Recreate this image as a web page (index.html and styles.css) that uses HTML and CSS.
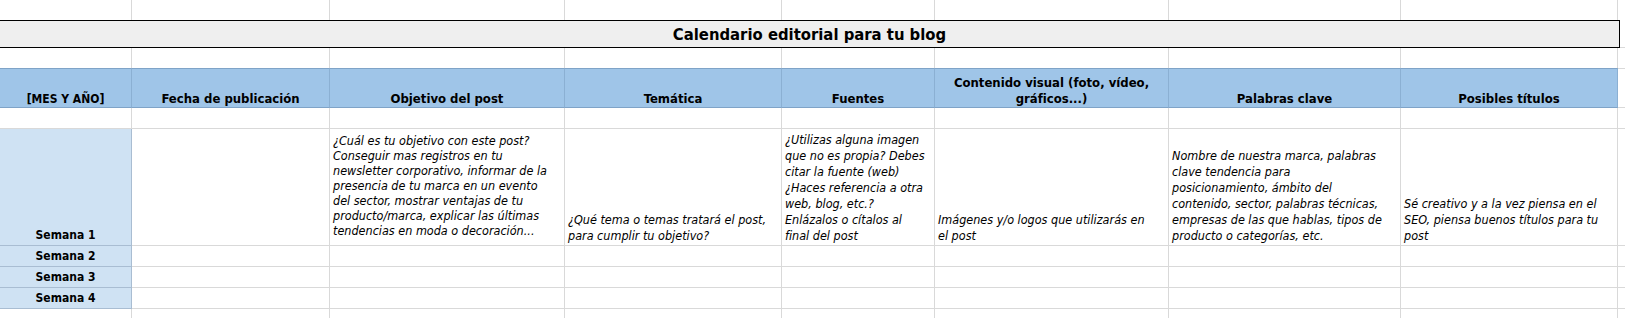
FILE: index.html
```html
<!DOCTYPE html>
<html lang="es">
<head>
<meta charset="utf-8">
<title>Calendario editorial para tu blog</title>
<link rel="stylesheet" href="styles.css">
</head>
<body>
<div class="sheet">
  <div class="row r-top">
    <div class="c"></div><div class="c"></div><div class="c"></div><div class="c"></div><div class="c"></div><div class="c"></div><div class="c"></div><div class="c"></div><div class="c last"></div>
  </div>
  <div class="row r-title">
    <div class="title">Calendario editorial para tu blog</div>
    <div class="c last"></div>
  </div>
  <div class="row r-blank">
    <div class="c"></div><div class="c"></div><div class="c"></div><div class="c"></div><div class="c"></div><div class="c"></div><div class="c"></div><div class="c"></div><div class="c last"></div>
  </div>
  <div class="row r-head">
    <div class="c h caps">[MES Y AÑO]</div>
    <div class="c h">Fecha de publicación</div>
    <div class="c h">Objetivo del post</div>
    <div class="c h">Temática</div>
    <div class="c h">Fuentes</div>
    <div class="c h">Contenido visual (foto, vídeo,<br>gráficos...)</div>
    <div class="c h">Palabras clave</div>
    <div class="c h">Posibles títulos</div>
    <div class="c last"></div>
  </div>
  <div class="row r-blank2">
    <div class="c"></div><div class="c"></div><div class="c"></div><div class="c"></div><div class="c"></div><div class="c"></div><div class="c"></div><div class="c"></div><div class="c last"></div>
  </div>
  <div class="row r-week1">
    <div class="c wk">Semana 1</div>
    <div class="c"></div>
    <div class="c t top">¿Cuál es tu objetivo con este post?<br>Conseguir mas registros en tu<br>newsletter corporativo, informar de la<br>presencia de tu marca en un evento<br>del sector, mostrar ventajas de tu<br>producto/marca, explicar las últimas<br>tendencias en moda o decoración...</div>
    <div class="c t">¿Qué tema o temas tratará el post,<br>para cumplir tu objetivo?</div>
    <div class="c t">¿Utilizas alguna imagen<br>que no es propia? Debes<br>citar la fuente (web)<br>¿Haces referencia a otra<br>web, blog, etc.?<br>Enlázalos o cítalos al<br>final del post</div>
    <div class="c t">Imágenes y/o logos que utilizarás en<br>el post</div>
    <div class="c t">Nombre de nuestra marca, palabras<br>clave tendencia para<br>posicionamiento, ámbito del<br>contenido, sector, palabras técnicas,<br>empresas de las que hablas, tipos de<br>producto o categorías, etc.</div>
    <div class="c t">Sé creativo y a la vez piensa en el<br>SEO, piensa buenos títulos para tu<br>post</div>
    <div class="c last"></div>
  </div>
  <div class="row r-week">
    <div class="c wk">Semana 2</div><div class="c"></div><div class="c"></div><div class="c"></div><div class="c"></div><div class="c"></div><div class="c"></div><div class="c"></div><div class="c last"></div>
  </div>
  <div class="row r-week">
    <div class="c wk">Semana 3</div><div class="c"></div><div class="c"></div><div class="c"></div><div class="c"></div><div class="c"></div><div class="c"></div><div class="c"></div><div class="c last"></div>
  </div>
  <div class="row r-week">
    <div class="c wk">Semana 4</div><div class="c"></div><div class="c"></div><div class="c"></div><div class="c"></div><div class="c"></div><div class="c"></div><div class="c"></div><div class="c last"></div>
  </div>
  <div class="row r-end">
    <div class="c"></div><div class="c"></div><div class="c"></div><div class="c"></div><div class="c"></div><div class="c"></div><div class="c"></div><div class="c"></div><div class="c last"></div>
  </div>
</div>
</body>
</html>
```

FILE: styles.css
```css
* { box-sizing: border-box; }
html, body { margin: 0; padding: 0; background: #fff; }
body {
  width: 1625px;
  height: 318px;
  overflow: hidden;
  font-family: "DejaVu Sans Condensed", "DejaVu Sans", sans-serif;
  font-stretch: condensed;
  color: #000;
}
.sheet { display: flex; flex-direction: column; }
.row {
  display: grid;
  grid-template-columns: 132px 198px 235px 217px 153px 234px 232px 217px 7px;
}
.c {
  border-right: 1px solid #d9d9d9;
  border-bottom: 1px solid #d9d9d9;
  display: flex;
  align-items: flex-end;
  white-space: nowrap;
  overflow: hidden;
}
.c.last { border-right: none; }

.r-top { height: 20px; }
.r-top .c { border-bottom: none; }

.r-title { height: 28px; grid-template-columns: 1620px 5px; }
.title {
  background: #efefef;
  border-top: 1px solid #000;
  border-bottom: 1px solid #000;
  border-right: 1px solid #000;
  font-weight: bold;
  font-size: 16.5px;
  display: flex;
  align-items: center;
  justify-content: center;
  padding-top: 1px;
}
.r-title .c.last { border-bottom: 1px solid #d9d9d9; }

.r-blank { height: 20px; }
.r-blank .c { border-bottom: none; }

.r-head { height: 40px; }
.r-head .c.h {
  background: #9fc5e8;
  border-top: 1px solid #7fa3c7;
  border-bottom: 1px solid #7fa3c7;
  border-right: 1px solid #8bb0d3;
  font-weight: bold;
  font-size: 13px;
  line-height: 16px;
  justify-content: center;
  text-align: center;
  padding-bottom: 0;
}
.r-head .c.h.caps { font-size: 12px; }
.r-head .c.last { border-top: 1px solid #d9d9d9; }

.r-blank2 { height: 21px; }

.r-week1 { height: 117px; }
.r-week { height: 21px; }
.r-end { height: 12px; }
.r-end .c { border-bottom: none; }

.c.wk {
  background: #cfe2f3;
  border-right: 1px solid #a9bdd2;
  border-bottom: 1px solid #a9bdd2;
  justify-content: center;
  font-weight: bold;
  font-size: 12px;
  line-height: 15px;
  padding-bottom: 2px;
}
.c.t {
  font-style: italic;
  font-size: 12.5px;
  line-height: 16px;
  padding: 0 3px 1px 3px;
}
.c.t.top {
  align-items: flex-start;
  line-height: 15px;
  padding-top: 4px;
}
```
